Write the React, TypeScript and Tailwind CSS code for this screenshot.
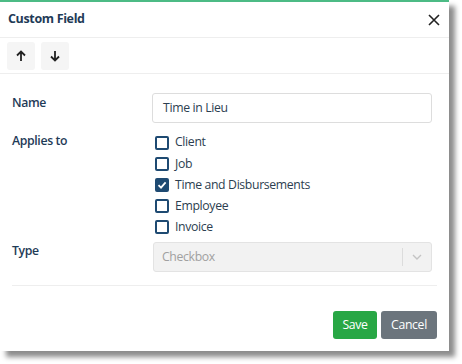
import { useState } from 'react';

const options = ['Client', 'Job', 'Time and Disbursements', 'Employee', 'Invoice'];

function Check({ checked }: { checked: boolean }) {
  return (
    <span
      className={`w-[14px] h-[14px] rounded-[2px] border-2 border-[#1e4a72] flex items-center justify-center ${
        checked ? 'bg-[#1e4a72]' : 'bg-white'
      }`}
    >
      {checked && (
        <svg width="10" height="10" viewBox="0 0 10 10">
          <path d="M1.5 5.2 L4 7.6 L8.6 2.4" fill="none" stroke="white" strokeWidth="1.8" />
        </svg>
      )}
    </span>
  );
}

export default function App() {
  const [picked, setPicked] = useState<string[]>(['Time and Disbursements']);
  const toggle = (o: string) =>
    setPicked(p => (p.includes(o) ? p.filter(x => x !== o) : [...p, o]));

  return (
    <div className="w-[462px] h-[364px] bg-white font-['Open_Sans',sans-serif] tracking-[-0.35px]">
      <div className="w-[449px] h-[351px] bg-white flex flex-col shadow-[6px_6px_5px_rgba(0,0,0,0.45)]">
        {/* Header */}
        <div className="h-[38px] border-t-[2px] border-[#4cbb85] border-b border-b-[#eeeeee] flex items-center justify-between pl-2 pr-[9px]">
          <p className="font-bold text-[12.5px] text-[#1f3b57]">Custom Field</p>
          <svg width="12" height="12" viewBox="0 0 12 12">
            <path d="M1 1 L11 11 M11 1 L1 11" stroke="#222" strokeWidth="1.6" />
          </svg>
        </div>

        {/* Toolbar */}
        <div className="h-[36px] border-b border-[#eeeeee] flex items-center gap-[6px] pl-[7px]">
          <button className="w-[28px] h-[28px] rounded-[3px] bg-[#f5f5f5] flex items-center justify-center">
            <svg width="12" height="12" viewBox="0 0 12 12">
              <path d="M6 11 V2 M2 5.5 L6 1.5 L10 5.5" fill="none" stroke="#222" strokeWidth="1.8" />
            </svg>
          </button>
          <button className="w-[28px] h-[28px] rounded-[3px] bg-[#f5f5f5] flex items-center justify-center">
            <svg width="12" height="12" viewBox="0 0 12 12">
              <path d="M6 1 V10 M2 6.5 L6 10.5 L10 6.5" fill="none" stroke="#222" strokeWidth="1.8" />
            </svg>
          </button>
        </div>

        {/* Form */}
        <div className="pt-[19px] pl-[12px] pr-[12px] flex flex-col text-[12.25px]">
          <div className="flex">
            <p className="w-[140px] pt-[1px] font-semibold text-[#1f3b57]">Name</p>
            <div className="w-[280px] h-[30px] border border-[#dddddd] rounded-[3px] flex items-center px-[10px] text-[#2c3e50]">
              Time in Lieu
            </div>
          </div>

          <div className="flex mt-[9px]">
            <p className="w-[140px] pt-[0px] font-semibold text-[#1f3b57]">Applies to</p>
            <div className="flex flex-col pl-[3px]">
              {options.map(o => (
                <label key={o} className="h-[21.2px] flex items-center gap-[6px] text-[#2c3e50] cursor-pointer" onClick={() => toggle(o)}>
                  <Check checked={picked.includes(o)} />
                  {o}
                </label>
              ))}
            </div>
          </div>

          <div className="flex mt-[4px]">
            <p className="w-[141px] pt-[0px] font-semibold text-[#1f3b57]">Type</p>
            <div className="w-[279px] h-[30px] border border-[#e3e3e3] rounded-[3px] bg-[#f2f2f2] flex items-center text-[#a0a0a0]">
              <span className="flex-1 pl-[8px]">Checkbox</span>
              <span className="w-px h-[18px] bg-[#dcdcdc]" />
              <span className="w-[28px] flex justify-center">
                <svg width="10" height="6" viewBox="0 0 10 6">
                  <path d="M1 1 L5 5 L9 1" fill="none" stroke="#c4c4c4" strokeWidth="1.4" />
                </svg>
              </span>
            </div>
          </div>

          <div className="mt-[13px] h-px bg-[#eeeeee] w-[425px]" />

          <div className="flex justify-end gap-[4px] mt-[25px] w-[425px]">
            <button className="h-[28px] w-[44px] rounded-[3px] bg-[#28a745] text-white">Save</button>
            <button className="h-[28px] w-[56px] rounded-[3px] bg-[#6c757d] text-white">Cancel</button>
          </div>
        </div>
      </div>
    </div>
  );
}
